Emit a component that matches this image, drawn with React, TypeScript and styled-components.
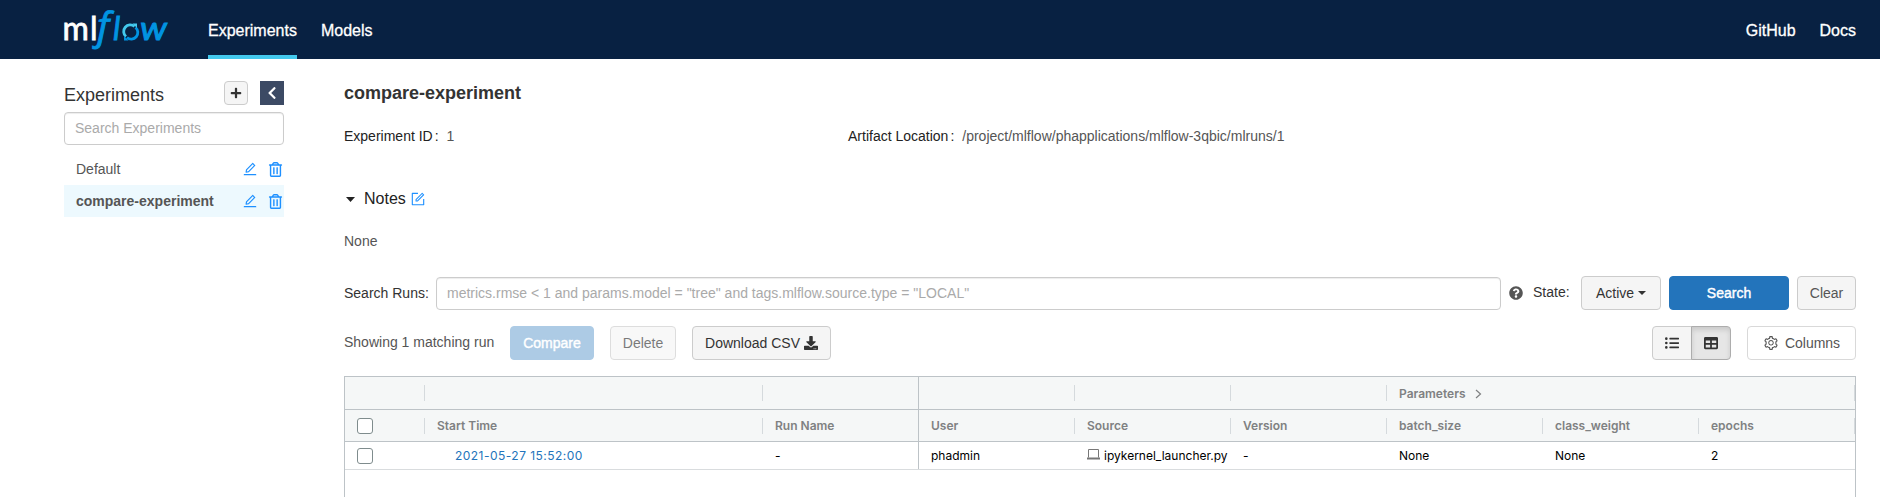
import React from 'react';
import styled, { createGlobalStyle, css } from 'styled-components';
import { AiOutlineEdit, AiOutlineForm, AiOutlineSetting } from 'react-icons/ai';
import { FaRegTrashAlt, FaQuestionCircle, FaDownload, FaListUl, FaTable, FaPlus, FaChevronLeft } from 'react-icons/fa';

const GlobalStyle = createGlobalStyle`
  * { box-sizing: border-box; }
  body {
    margin: 0;
    background: #fff;
    color: #333;
    font: 14px/20px "Liberation Sans", Arial, sans-serif;
    overflow: hidden;
  }
  svg { display: block; flex: none; }
`;

const Page = styled.div`
  height: 497px;
  overflow: hidden;
`;

const Header = styled.header`
  display: flex;
  align-items: stretch;
  height: 59px;
  padding: 0 24px 0 64px;
  background: #082142;
`;

const LogoLink = styled.a`
  width: 144px;
  padding-top: 5px;
`;

const LogoSvg = styled.svg`
  overflow: visible;
`;

const NavLink = styled.a<{ $active?: boolean }>`
  height: 59px;
  margin-right: 24px;
  padding-top: 3px;
  border-bottom: 4px solid ${(p) => (p.$active ? '#43c9ed' : 'transparent')};
  color: #fff;
  font-size: 16px;
  line-height: 55px;
  -webkit-text-stroke: 0.3px #fff;
  &:last-child { margin-right: 0; }
`;

const Spacer = styled.div`
  flex: 1;
`;

const Body = styled.div`
  display: flex;
`;

const Sidebar = styled.aside`
  width: 220px;
  margin: 22px 60px 0 64px;
`;

const SidebarHead = styled.div`
  display: flex;
  height: 24px;
  margin-bottom: 7px;
`;

const SidebarTitle = styled.h1`
  flex: 1;
  margin: 0;
  font-size: 18px;
  font-weight: 400;
  line-height: 29px;
`;

const SquareButton = styled.button<{ $dark?: boolean }>`
  display: flex;
  align-items: center;
  justify-content: center;
  width: 24px;
  height: 24px;
  padding: 0;
  border: 1px solid #ccc;
  border-radius: 4px;
  background: #f5f5f5;
  color: #333;
  ${(p) => p.$dark && css`
    margin-left: 12px;
    border: 0;
    border-radius: 0;
    background: #3c4a64;
    color: #fff;
  `}
`;

const TextInput = styled.input`
  display: block;
  height: 33px;
  padding: 0 10px 1px;
  border: 1px solid #ccc;
  border-radius: 4px;
  background: #fff;
  box-shadow: inset 0 1px 1px rgba(0, 0, 0, 0.075);
  font: 14px "Liberation Sans", Arial, sans-serif;
  &::placeholder { color: #aaa; opacity: 1; }
`;

const SidebarInput = styled(TextInput)`
  width: 100%;
  margin-bottom: 8px;
`;

const ExperimentRow = styled.div<{ $active?: boolean }>`
  display: flex;
  align-items: center;
  height: 32px;
  padding: 0 1px 0 12px;
  color: #555;
  background: ${(p) => (p.$active ? '#edf9fe' : 'transparent')};
  font-weight: ${(p) => (p.$active ? 700 : 400)};
`;

const RowName = styled.span`
  flex: 1;
`;

const RowIcons = styled.span`
  display: flex;
  align-items: center;
  gap: 10px;
  color: #1e90ff;
`;

const Main = styled.main`
  width: 1512px;
`;

const Title = styled.h2`
  margin: 21px 0 0;
  font-size: 18px;
  line-height: 26px;
`;

const Metadata = styled.div`
  display: grid;
  grid-template-columns: 504px 1fr;
  margin-top: 20px;
`;

const MetaLabel = styled.span`
  margin-right: 8px;
  color: #222;
`;

const MetaItem = styled.div`
  color: #555;
`;

const Colon = styled.span`
  margin-left: 2px;
`;

const NotesHead = styled.div`
  display: flex;
  align-items: center;
  height: 22px;
  margin-top: 42px;
  padding-left: 2px;
  color: #222;
  font-size: 16px;
`;

const NotesTitle = styled.span`
  margin: 0 4px 0 9px;
`;

const NotesIcon = styled.span`
  color: #1e90ff;
`;

const NotesBody = styled.div`
  margin-top: 21px;
  color: #555;
`;

const SearchBar = styled.div`
  display: flex;
  align-items: center;
  height: 34px;
  margin-top: 25px;
`;

const SearchLabel = styled.label`
  width: 92px;
`;

const RunInput = styled(TextInput)`
  width: 1065px;
  margin-top: 1px;
`;

const HelpIcon = styled.span`
  margin: 0 10px 0 8px;
  color: #555;
`;

const StateLabel = styled.span`
  width: 48px;
  padding-bottom: 2px;
`;

const Button = styled.button<{ $width: number; $kind?: 'primary' | 'plain'; $disabled?: boolean }>`
  display: flex;
  align-items: center;
  justify-content: center;
  width: ${(p) => p.$width}px;
  height: 34px;
  padding: 0;
  border: 1px solid #ccc;
  border-radius: 4px;
  background: #f5f5f5;
  color: #333;
  font: 14px "Liberation Sans", Arial, sans-serif;
  ${(p) => p.$kind === 'primary' && css`
    border-color: #2374bb;
    background: #2374bb;
    color: #fff;
    -webkit-text-stroke: 0.4px #fff;
  `}
  ${(p) => p.$kind === 'plain' && css`
    gap: 6px;
    border-color: #d9d9d9;
    background: #fff;
    color: #555;
  `}
  ${(p) => p.$disabled && css`
    opacity: ${p.$kind === 'primary' ? 0.37 : 0.65};
  `}
`;

const ClearButton = styled(Button)`
  color: #555;
`;

const ButtonGroup = styled.div`
  display: flex;
  gap: 8px;
`;

const Toolbar = styled.div`
  display: flex;
  align-items: center;
  height: 34px;
  margin: 16px 0;
  gap: 16px;
`;

const ResultCount = styled.span`
  width: 150px;
  padding-bottom: 2px;
  color: #555;
  white-space: nowrap;
`;

const ViewToggle = styled.div`
  display: flex;
`;

const ToggleButton = styled(Button)<{ $pressed?: boolean }>`
  border-radius: 4px 0 0 4px;
  ${(p) => p.$pressed && css`
    margin-left: -1px;
    border-color: #adadad;
    border-radius: 0 4px 4px 0;
    background: #e6e6e6;
    box-shadow: inset 0 3px 5px rgba(0, 0, 0, 0.125);
  `}
`;

const Table = styled.div`
  height: 140px;
  border: 1px solid #bdc3c7;
  border-bottom: 0;
  font-family: Inter, sans-serif;
  font-size: 12px;
`;

const TableRow = styled.div<{ $height: number; $head?: boolean }>`
  display: grid;
  grid-template-columns: 80px 338px repeat(7, 156px);
  height: ${(p) => p.$height}px;
  border-bottom: 1px solid ${(p) => (p.$head ? '#bdc3c7' : '#d9dcde')};
  background: ${(p) => (p.$head ? '#f5f7f7' : '#fff')};
  color: ${(p) => (p.$head ? '#7f8182' : '#000')};
  font-weight: ${(p) => (p.$head ? 600 : 400)};
`;

const Cell = styled.div<{ $divider?: 'short' | 'full'; $indent?: boolean }>`
  display: flex;
  align-items: center;
  padding-left: ${(p) => (p.$indent ? 30 : 12)}px;
  white-space: nowrap;
  ${(p) => p.$divider === 'full' && css`border-right: 1px solid #bdc3c7;`}
  ${(p) => p.$divider === 'short' && css`
    &::after {
      content: '';
      width: 1px;
      height: 16px;
      margin-left: auto;
      background: #d5dadd;
    }
  `}
`;

const GroupCell = styled(Cell)`
  padding-top: 1px;
`;

const Checkbox = styled.span`
  width: 16px;
  height: 16px;
  border: 1px solid #7f8c8d;
  border-radius: 3px;
  background: #fff;
`;

const RunLink = styled.a`
  color: #2374bb;
  letter-spacing: 0.47px;
`;

const SourceIcon = styled.span`
  margin: 0 4px 2px 0;
  color: #777;
`;

const Logo = () => (
  <LogoSvg width="112" height="48" viewBox="0 0 112 48">
    <g fontFamily="Lato, sans-serif" fontSize="32">
      <text x="-1.5" y="35" fill="#fff" stroke="#fff" strokeWidth="0.8" textLength="35">ml</text>
      <g fill="#0194e2" stroke="#0194e2" fontStyle="italic">
        <text x="33" y="34.5" strokeWidth="0.9" fontFamily="Open Sans, sans-serif" fontSize="39">f</text>
        <text x="49" y="35" strokeWidth="0.8">l</text>
        <text x="76" y="35" strokeWidth="0.9" textLength="27" lengthAdjust="spacingAndGlyphs">w</text>
      </g>
    </g>
    <g fill="none" strokeWidth="2.8">
      <path d="M62 31.500a6.200 6.200 0 0 1 8.500 -10" stroke="#43c9ed" />
      <path d="M71.500 22.500a6.200 6.200 0 0 1-8.500 10" stroke="#0194e2" />
    </g>
    <path d="M68.500 18.500h4.500v4.500z" fill="#43c9ed" />
    <path d="M64.500 35.500h-4.500v-4.500z" fill="#0194e2" />
  </LogoSvg>
);

const Caret = ({ width = 9, height = 5 }: { width?: number; height?: number }) => (
  <svg width={width} height={height} viewBox="0 0 8 5" preserveAspectRatio="none"><path d="M0 0h8L4 5z" fill="currentColor" /></svg>
);

const Chevron = () => (
  <svg width="18" height="10" viewBox="0 0 18 10">
    <path d="M10 1l4.500 4-4.500 4" fill="none" stroke="currentColor" strokeWidth="1.2" />
  </svg>
);

const Laptop = () => (
  <svg width="13" height="11" viewBox="0 0 13 11">
    <path d="M1.500 8.500v-8h10v8" fill="none" stroke="currentColor" />
    <path d="M0 8.500h13v2H0z" fill="currentColor" />
  </svg>
);

const experiments = ['Default', 'compare-experiment'];
const columns = ['Start Time', 'Run Name', 'User', 'Source', 'Version', 'batch_size', 'class_weight', 'epochs'];
const divider = (index: number) => (index === 2 ? 'full' : 'short') as 'full' | 'short';

export default function App() {
  return (
    <Page>
      <GlobalStyle />
      <Header>
        <LogoLink><Logo /></LogoLink>
        <NavLink $active>Experiments</NavLink>
        <NavLink>Models</NavLink>
        <Spacer />
        <NavLink>GitHub</NavLink>
        <NavLink>Docs</NavLink>
      </Header>
      <Body>
        <Sidebar>
          <SidebarHead>
            <SidebarTitle>Experiments</SidebarTitle>
            <SquareButton><FaPlus size={12} /></SquareButton>
            <SquareButton $dark><FaChevronLeft size={14} /></SquareButton>
          </SidebarHead>
          <SidebarInput placeholder="Search Experiments" />
          {experiments.map((name, i) => (
            <ExperimentRow key={name} $active={i === 1}>
              <RowName>{name}</RowName>
              <RowIcons><AiOutlineEdit size={16} /><FaRegTrashAlt size={15} /></RowIcons>
            </ExperimentRow>
          ))}
        </Sidebar>
        <Main>
          <Title>compare-experiment</Title>
          <Metadata>
            <MetaItem><MetaLabel>Experiment ID<Colon>:</Colon></MetaLabel>1</MetaItem>
            <MetaItem><MetaLabel>Artifact Location<Colon>:</Colon></MetaLabel>/project/mlflow/phapplications/mlflow-3qbic/mlruns/1</MetaItem>
          </Metadata>
          <NotesHead>
            <Caret />
            <NotesTitle>Notes</NotesTitle>
            <NotesIcon><AiOutlineForm size={16} /></NotesIcon>
          </NotesHead>
          <NotesBody>None</NotesBody>
          <SearchBar>
            <SearchLabel>Search Runs:</SearchLabel>
            <RunInput placeholder={'metrics.rmse < 1 and params.model = "tree" and tags.mlflow.source.type = "LOCAL"'} />
            <HelpIcon><FaQuestionCircle size={14} /></HelpIcon>
            <StateLabel>State:</StateLabel>
            <ButtonGroup>
              <Button $width={80}>Active&nbsp;<Caret width={8} height={4} /></Button>
              <Button $width={120} $kind="primary">Search</Button>
              <ClearButton $width={59}>Clear</ClearButton>
            </ButtonGroup>
          </SearchBar>
          <Toolbar>
            <ResultCount>Showing 1 matching run</ResultCount>
            <Button $width={84} $kind="primary" $disabled>Compare</Button>
            <Button $width={66} $disabled>Delete</Button>
            <Button $width={139}>Download CSV&nbsp;<FaDownload size={14} /></Button>
            <Spacer />
            <ViewToggle>
              <ToggleButton $width={40}><FaListUl size={14} /></ToggleButton>
              <ToggleButton $width={40} $pressed><FaTable size={14} /></ToggleButton>
            </ViewToggle>
            <Button $width={109} $kind="plain"><AiOutlineSetting size={16} />Columns</Button>
          </Toolbar>
          <Table>
            <TableRow $height={33} $head>
              <Cell $divider="short" />
              <Cell $divider="short" />
              <Cell $divider="full" />
              <Cell $divider="short" />
              <Cell $divider="short" />
              <Cell $divider="short" />
              <GroupCell>Parameters<Chevron /></GroupCell>
              <Cell />
              <Cell $divider="short" />
            </TableRow>
            <TableRow $height={32} $head>
              <Cell $divider="short"><Checkbox /></Cell>
              {columns.map((name, i) => (
                <Cell key={name} $divider={divider(i + 1)}>{name}</Cell>
              ))}
            </TableRow>
            <TableRow $height={28}>
              <Cell><Checkbox /></Cell>
              <Cell $indent><RunLink>2021-05-27 15:52:00</RunLink></Cell>
              <Cell $divider="full">-</Cell>
              <Cell>phadmin</Cell>
              <Cell><SourceIcon><Laptop /></SourceIcon>ipykernel_launcher.py</Cell>
              <Cell>-</Cell>
              <Cell>None</Cell>
              <Cell>None</Cell>
              <Cell>2</Cell>
            </TableRow>
          </Table>
        </Main>
      </Body>
    </Page>
  );
}
